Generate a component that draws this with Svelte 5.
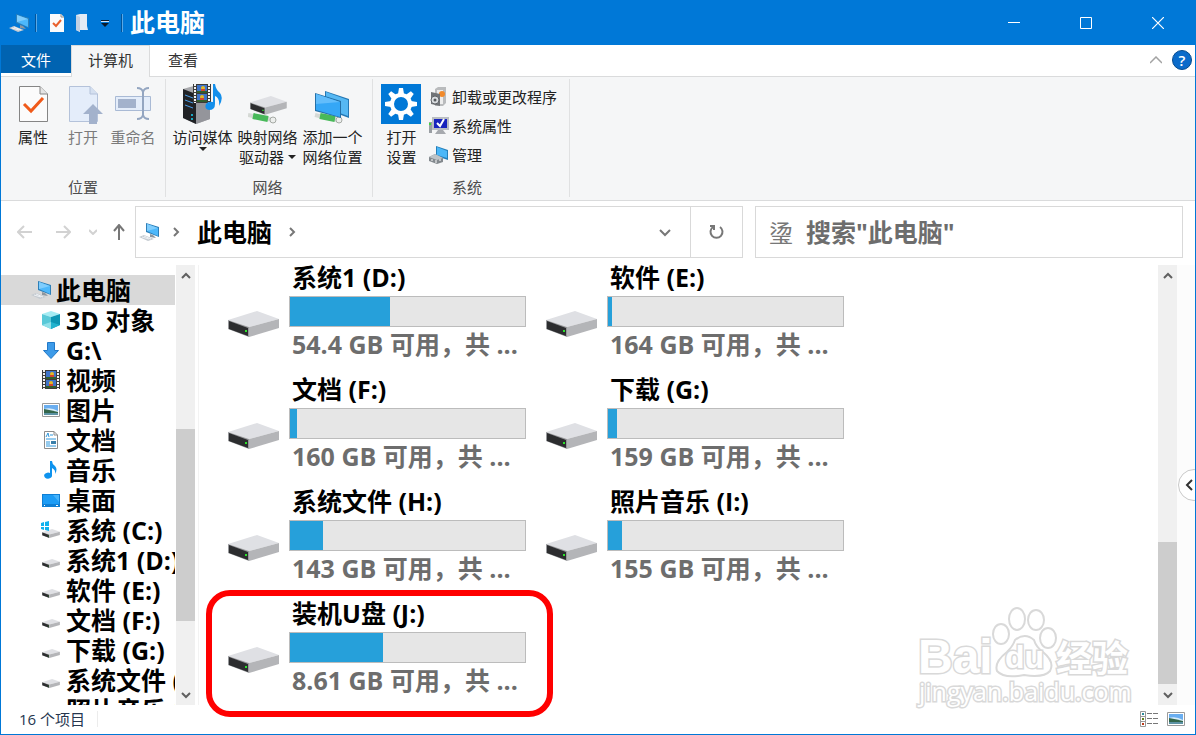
<script>
  const tree = [
    { icon: 'cube', label: '3D 对象' },
    { icon: 'down', label: 'G:\\' },
    { icon: 'film', label: '视频' },
    { icon: 'photo', label: '图片' },
    { icon: 'doc', label: '文档' },
    { icon: 'music', label: '音乐' },
    { icon: 'desktop', label: '桌面' },
    { icon: 'windrive', label: '系统 (C:)' },
    { icon: 'drive', label: '系统1 (D:)' },
    { icon: 'drive', label: '软件 (E:)' },
    { icon: 'drive', label: '文档 (F:)' },
    { icon: 'drive', label: '下载 (G:)' },
    { icon: 'drive', label: '系统文件 (H:)' },
    { icon: 'drive', label: '照片音乐 (I:)' }
  ];
  const drives = [
    { name: '系统1 (D:)', used: 42.6, free: '54.4 GB' },
    { name: '软件 (E:)', used: 1.8, free: '164 GB' },
    { name: '文档 (F:)', used: 3, free: '160 GB' },
    { name: '下载 (G:)', used: 3.8, free: '159 GB' },
    { name: '系统文件 (H:)', used: 14, free: '143 GB' },
    { name: '照片音乐 (I:)', used: 6, free: '155 GB' },
    { name: '装机U盘 (J:)', used: 39.6, free: '8.61 GB', marked: true }
  ];
  const teeth = [0, 45, 90, 135, 180, 225, 270, 315];
  let query = $state('');
</script>

{#snippet driveShape()}
  <path d="M0 9 29 0 51 8 21 16Z" fill="#dfe0e4" />
  <path d="M21 16 51 8V17L21 26Z" fill="#b4b5b8" />
  <path d="M0 9 21 16V26L0 18Z" fill="#97989b" />
  <path d="M1 10 20 17V25L1 18Z" fill="#2c2d2f" />
  <path d="M17 19h2v2h-2z" fill="#2be32b" />
{/snippet}

{#snippet filmShape()}
  <path d="M0 0H18V19H0Z" fill="#3b3b3b" />
  <path d="M2 0V19M16 0V19" stroke="#f3f3f3" stroke-width="2" stroke-dasharray="2 1" />
  <path d="M4 1H14V9H4ZM4 10H14V18H4Z" fill="#3f74c9" />
  <path d="M4 7H14V9H4ZM4 16H14V18H4Z" fill="#315d2d" />
  <circle cx="10" cy="4" r="2" fill="#e5b923" /><circle cx="9" cy="13" r="2" fill="#e5b923" />
  <path d="M8 5h4v2H8zM7 14h4v2H7z" fill="#d2452e" />
{/snippet}

{#snippet photoShape()}
  <path d="M.5 .5H17.5V13.5H.5Z" fill="#fff" stroke="#9a9a9a" />
  <path d="M2 2H16V12H2Z" fill="#6aaef0" />
  <path d="M2 6Q9 4 16 8V9H2Z" fill="#d9eefb" />
  <path d="M2 6Q8 7 16 9V10H2Z" fill="#33664b" />
  <path d="M2 10H16V12H2Z" fill="#5d93a5" />
{/snippet}

{#snippet pcShape()}
  <path d="M7 0 20 4V14L7 9Z" fill="#2d7fb8" />
  <path d="M8 1 19 5V13L8 8Z" fill="#4db8fb" />
  <path d="M8 1 19 5 8 8Z" fill="#7fcdfd" />
  <path d="M11 11 14 12 17 15 11 14Z" fill="#8d969e" />
  <path d="M0 14 5 12 15 16 9 18Z" fill="#c5cbd1" />
  <path d="M3 14 10 16M5 13 12 16" stroke="#eef1f4" />
{/snippet}

{#snippet chevron(d)}
  <svg width="12" height="12" viewBox="0 0 12 12" fill="none" stroke="currentColor" stroke-width="2" aria-hidden="true"><path {d} /></svg>
{/snippet}

{#snippet scrollbar(kind)}
  <div class="scrollbar {kind}">
    <button aria-label="向上滚动">{@render chevron('M2 8 6 4 10 8')}</button>
    <div class="track"><div class="thumb"></div></div>
    <button aria-label="向下滚动">{@render chevron('M2 4 6 8 10 4')}</button>
  </div>
{/snippet}

{#snippet treeIcon(kind)}
  <svg width="20" height="20" viewBox="0 0 20 20" aria-hidden="true">
    {#if kind === 'cube'}
      <path d="M1 4 10 1 19 4 10 7Z" fill="#a5ecf3" /><path d="M1 4 10 7V19L1 15Z" fill="#58c9d8" /><path d="M10 7 19 4V15L10 19Z" fill="#0d96b3" />
      <path d="M1 15 10 12V19Z" fill="#8fe0e9" /><path d="M10 12 19 15 10 19Z" fill="#22b3ce" />
    {:else if kind === 'down'}
      <path d="M6.500 2.500H13.500V10.500H17.500L10 18.500 2.500 10.500H6.500Z" fill="#3d9be9" stroke="#2279c8" />
    {:else if kind === 'film'}
      <g transform="translate(1 0)">{@render filmShape()}</g>
    {:else if kind === 'photo'}
      <g transform="translate(1 3)">{@render photoShape()}</g>
    {:else if kind === 'doc'}
      <path d="M3.500 1.500H13L16.500 5V18.500H3.500Z" fill="#fff" stroke="#8c8c8c" /><path d="M13 1.500V5H16.500" fill="none" stroke="#8c8c8c" />
      <path d="M5 7 7 3 8 7M9 5H12M5 9H15M5 12H9M5 14H9M5 16H15" fill="none" stroke="#2f97dc" /><path d="M10 11H15V14H10Z" fill="#3b7fa9" />
    {:else if kind === 'music'}
      <path d="M9 1H11Q11 4 14 6Q17 9 14 14Q15 10 11 8V15A4 3 0 1 1 9 13Z" fill="#0e93ee" />
    {:else if kind === 'desktop'}
      <path d="M1 4H19V17H1Z" fill="#0f7fd4" /><path d="M2 5H18V14H2Z" fill="#1d9cf5" /><path d="M12 5H18V12Z" fill="#45b3fb" /><path d="M3 15.500H4M15 15.500H17" stroke="#fff" />
    {:else}
      <g transform="translate(1 9) scale(.35)">{@render driveShape()}</g>
      {#if kind === 'windrive'}
        <path d="M0 2H8V10H0Z" fill="#fff" /><path d="M0 3 3 2V6H0ZM4 2 8 1V6H4ZM0 7H3V10L0 9ZM4 7H8V11L4 10Z" fill="#10b2ee" />
      {/if}
    {/if}
  </svg>
{/snippet}

<div class="window">
  <header class="titlebar">
    <svg class="app-icon" width="20" height="18" viewBox="0 0 20 18" aria-hidden="true">{@render pcShape()}</svg>
    <span class="rule"></span>
    <button class="quick check" aria-label="属性">
      <svg width="14" height="18" viewBox="0 0 14 18"><path d="M0 0H11L14 3V18H0Z" fill="#fbfbfb" /><path d="M11 0V3H14" fill="none" stroke="#8b8b8b" /><path d="M3 9 6 12 11 6" fill="none" stroke="#e9602c" stroke-width="2" /></svg>
    </button>
    <button class="quick" aria-label="新建文件夹">
      <svg width="12" height="18" viewBox="0 0 12 18"><path d="M0 1 4 0H11V12L12 16H4V18L0 16Z" fill="#e3ebf5" /><path d="M0 1 4 3V18L0 16Z" fill="#c3d1e3" /></svg>
    </button>
    <button class="quick more" aria-label="自定义快速访问工具栏">
      <svg width="8" height="8" viewBox="0 0 8 8"><path d="M0 0H8V1H0ZM0 3H8L4 7Z" fill="#0b1a2a" /><path d="M0 1H8V2H0Z" fill="#cfe3f7" /></svg>
    </button>
    <span class="rule"></span>
    <h1>此电脑</h1>
    <div class="controls">
      <button aria-label="最小化"><svg width="12" height="12" viewBox="0 0 12 12"><path d="M0 5.500H12" stroke="#fff" /></svg></button>
      <button aria-label="最大化"><svg width="12" height="12" viewBox="0 0 12 12"><path d="M.5 .5H11.500V11.500H.5Z" fill="none" stroke="#fff" /></svg></button>
      <button aria-label="关闭"><svg width="12" height="12" viewBox="0 0 12 12"><path d="M0 0 12 12M12 0 0 12" stroke="#fff" stroke-width="1.200" /></svg></button>
    </div>
  </header>

  <nav class="tabs" aria-label="功能区">
    <button class="file">文件</button>
    <button class="active">计算机</button>
    <button>查看</button>
    <div class="help">
      <button aria-label="折叠功能区"><svg width="12" height="8" viewBox="0 0 12 8"><path d="M0 7 6 1 12 7" fill="none" stroke="#a3a3a3" stroke-width="1.500" /></svg></button>
      <button class="question" aria-label="帮助">?</button>
    </div>
  </nav>

  <section class="ribbon">
    <div class="group place">
      <div class="tools">
        <button>
          <svg width="40" height="40" viewBox="0 0 40 40" aria-hidden="true"><path d="M6.500 2.500H27L34.500 10V37.500H6.500Z" fill="#fbfbfb" stroke="#858585" /><path d="M27 2.500V10H34.500" fill="#e4e4e4" stroke="#858585" /><path d="M11 20 18 27 30 14" fill="none" stroke="#f05a1a" stroke-width="3" /></svg>
          <span>属性</span>
        </button>
        <button disabled>
          <svg width="40" height="40" viewBox="0 0 40 40" aria-hidden="true"><path d="M6.500 2.500H27L34.500 10V37.500H6.500Z" fill="#e4edfa" stroke="#b4c2da" /><path d="M27 2.500V10H34.500" fill="#d5e0f0" stroke="#b4c2da" /><path d="M30 20 40 30H34V40H26V30H20Z" fill="#a3b2cc" /></svg>
          <span>打开</span>
        </button>
        <button disabled>
          <svg width="40" height="40" viewBox="0 0 40 40" aria-hidden="true"><path d="M2.500 12.500H37.500V26.500H2.500Z" fill="#e4edfa" stroke="#a9bad5" /><path d="M5 15H23V24H5Z" fill="#a3b2cc" /><path d="M24 4Q29 4 30 8Q31 4 36 4M30 8V31M24 35Q29 35 30 31Q31 35 36 35" fill="none" stroke="#94a6c1" stroke-width="2" /></svg>
          <span>重命名</span>
        </button>
      </div>
      <h2>位置</h2>
    </div>

    <div class="group network">
      <div class="tools">
        <button>
          <svg width="40" height="40" viewBox="0 0 40 40" aria-hidden="true">
            <path d="M0 5 14 1 27 8V35L13 40 0 34Z" fill="#a7a8ac" /><path d="M0 5 13 10V40L0 34Z" fill="#202226" /><path d="M13 10 27 7V35L13 40Z" fill="#94959b" />
            <path d="M2 11 10 14M2 16 10 19M2 21 10 24" stroke="#4a9ee8" /><circle cx="9" cy="35" r="1" fill="#19d4f6" /><circle cx="9" cy="31" r="1" fill="#19d4f6" />
            <g transform="translate(10 0)">{@render filmShape()}</g>
            <path d="M30 0H32Q33 6 37 9Q41 14 36 22Q37 14 32 12V20Q32 26 26 26Q21 25 23 20Q25 17 30 18Z" fill="#138feb" />
          </svg>
          <span>访问媒体</span>
          <i class="arrow"></i>
        </button>
        <button>
          <svg width="40" height="40" viewBox="0 0 40 40" aria-hidden="true">
            <path d="M0 31 25 36" stroke="#d5d9d5" stroke-width="4" /><path d="M5 32 20 35" stroke="#48b95a" stroke-width="6" /><circle cx="25" cy="36" r="3" fill="#eceeec" stroke="#a5aaa5" />
            <g transform="translate(2 12) scale(.72)">{@render driveShape()}</g>
          </svg>
          <span>映射网络<br />驱动器<i class="arrow inline"></i></span>
        </button>
        <button>
          <svg width="40" height="40" viewBox="0 0 40 40" aria-hidden="true">
            <path d="M12 7 36 15V34L12 25Z" fill="#2578b4" /><path d="M13 8 35 16V32L13 24Z" fill="#56b8f3" />
            <path d="M2 31 28 37" stroke="#d5d9d5" stroke-width="4" /><path d="M7 32 22 35" stroke="#48b95a" stroke-width="6" /><circle cx="26" cy="36" r="3" fill="#eceeec" stroke="#a5aaa5" />
            <path d="M2 9 28 17V34L2 27Z" fill="#2470a8" /><path d="M3 10 27 18V33L3 26Z" fill="#35a7f6" /><path d="M3 10 27 18 3 20Z" fill="#62bdfb" />
          </svg>
          <span>添加一个<br />网络位置</span>
        </button>
      </div>
      <h2>网络</h2>
    </div>

    <div class="group system">
      <div class="tools">
        <button>
          <svg width="40" height="40" viewBox="0 0 40 40" aria-hidden="true">
            <path d="M0 0H40V40H0Z" fill="#0078d7" />
            {#each teeth as angle}
              <path d="M17 10 18 4H22L23 10Z" fill="#fff" transform="rotate({angle} 20 20)" />
            {/each}
            <circle cx="20" cy="20" r="9" fill="none" stroke="#fff" stroke-width="4" />
          </svg>
          <span>打开<br />设置</span>
        </button>
        <div class="stack">
          <button>
            <svg width="20" height="20" viewBox="0 0 20 20" aria-hidden="true"><path d="M6 2 9 0H17V16L14 19H6Z" fill="#b9bbbd" /><path d="M8 3H14V17H8Z" fill="#ededed" /><circle cx="13" cy="7" r="3" fill="#f28a2b" /><path d="M2 5 11 7V19L2 17Z" fill="#717477" /><circle cx="6" cy="13" r="4" fill="#dadde0" stroke="#606468" /><circle cx="6" cy="13" r="1.500" fill="#55595c" /></svg>
            <span>卸载或更改程序</span>
          </button>
          <button>
            <svg width="20" height="20" viewBox="0 0 20 20" aria-hidden="true"><path d="M0 6H3V17H0Z" fill="#999ea3" /><path d="M0 7H2V9H0Z" fill="#3ddb3a" /><path d="M3 1H20V14H3Z" fill="#b9bdc2" /><path d="M5 3H18V12H5Z" fill="#1824bd" /><path d="M8 7 11 10 15 3" fill="none" stroke="#fff" stroke-width="2" /><path d="M9 14H14L17 18H6Z" fill="#a6a9ae" /></svg>
            <span>系统属性</span>
          </button>
          <button>
            <svg width="20" height="20" viewBox="0 0 20 20" aria-hidden="true"><path d="M7 1 19 5V15L7 11Z" fill="#247fba" /><path d="M8 2 18 6V13L8 10Z" fill="#4bb7f8" /><path d="M0 12 6 9 14 13V17L8 19 0 16Z" fill="#83898e" /><path d="M0 12 6 9 14 13 8 15Z" fill="#bfc4c8" /><path d="M3 14V16M7 15V18M11 14V16" stroke="#fff" /></svg>
            <span>管理</span>
          </button>
        </div>
      </div>
      <h2>系统</h2>
    </div>
  </section>

  <section class="navigation">
    <div class="history">
      <button disabled aria-label="后退"><svg width="16" height="14" viewBox="0 0 16 14"><path d="M15 7H1M7 1 1 7 7 13" /></svg></button>
      <button disabled aria-label="前进"><svg width="16" height="14" viewBox="0 0 16 14"><path d="M1 7H15M9 1 15 7 9 13" /></svg></button>
      <button class="recent" disabled aria-label="最近位置"><svg width="8" height="6" viewBox="0 0 8 6"><path d="M0 1 4 5 8 1" /></svg></button>
      <button class="up" aria-label="上移"><svg width="12" height="16" viewBox="0 0 12 16"><path d="M6 16V1M1 7 6 1 11 7" /></svg></button>
    </div>
    <div class="address">
      <svg width="20" height="18" viewBox="0 0 20 18" aria-hidden="true">{@render pcShape()}</svg>
      <span class="crumb">{@render chevron('M4 2 8 6 4 10')}</span>
      <button class="path">此电脑</button>
      <span class="crumb">{@render chevron('M4 2 8 6 4 10')}</span>
      <button class="expand" aria-label="以前的位置">{@render chevron('M1 4 6 9 11 4')}</button>
      <button class="refresh" aria-label="刷新"><svg width="16" height="16" viewBox="0 0 16 16" fill="none" stroke="#777" stroke-width="2"><path d="M4 3A6 6 0 1 0 11 3" /><path d="M1 2H5V6" /></svg></button>
    </div>
    <label class="search">
      <span class="glyph" aria-hidden="true">&#x2C361;</span>
      <input type="text" aria-label="搜索" placeholder={'搜索"此电脑"'} bind:value={query} />
    </label>
  </section>

  <main class="body">
    <nav class="tree" aria-label="导航窗格">
      <a class="root" href="#pc"><svg width="20" height="18" viewBox="0 0 20 18" aria-hidden="true">{@render pcShape()}</svg><span>此电脑</span></a>
      {#each tree as item}
        <a href="#item">{@render treeIcon(item.icon)}<span>{item.label}</span></a>
      {/each}
    </nav>
    {@render scrollbar('side')}
    <section class="files">
      {#each drives as drive}
        <article class:marked={drive.marked}>
          <svg width="52" height="28" viewBox="0 0 52 28" aria-hidden="true">{@render driveShape()}</svg>
          <div class="info">
            <h3>{drive.name}</h3>
            <div class="meter" role="meter" aria-label={drive.name} aria-valuemin="0" aria-valuemax="100" aria-valuenow={drive.used}><div style="width: {drive.used}%"></div></div>
            <p>{drive.free} 可用，共 ...</p>
          </div>
        </article>
      {/each}
      <svg class="watermark" width="224" height="112" viewBox="0 0 224 112" aria-hidden="true">
        <g fill="#fff" stroke="#d9d9d9" stroke-width="2">
          <ellipse cx="89" cy="37" rx="8" ry="10" /><ellipse cx="105" cy="22" rx="8" ry="11" /><ellipse cx="124" cy="23" rx="8" ry="10" /><ellipse cx="136" cy="41" rx="8" ry="10" />
          <path d="M85 74Q82 65 95 55Q101 49 103 43Q113 35 122 43Q124 50 131 55Q143 65 138 74Q132 81 112 78Q92 82 85 74Z" />
          <g paint-order="stroke" stroke-width="3">
            <text class="latin" x="6" y="76" font-size="48">Bai</text>
            <text class="latin" x="93" y="71" font-size="32">du</text>
            <text class="han" x="144" y="75" font-size="36">经验</text>
            <text class="url" x="7" y="104" font-size="25">jingyan.baidu.com</text>
          </g>
        </g>
      </svg>
    </section>
    {@render scrollbar('main')}
    <div class="edge"><button aria-label="展开侧栏">{@render chevron('M9 1 4 6 9 11')}</button></div>
  </main>

  <footer>
    <span>16 个项目</span>
    <div class="views">
      <button aria-label="详细信息"><svg width="20" height="16" viewBox="0 0 20 16"><path d="M1.500 .5H6.500V15.500H1.500ZM1.500 5.500H6.500M1.500 10.500H6.500" fill="#fff" stroke="#999" /><path d="M3 2H5V4H3Z" fill="#2e8c9c" /><path d="M3 7H5V9H3Z" fill="#65811e" /><path d="M3 12H5V14H3Z" fill="#bd3b1a" /><path d="M8 2.500H13M14 2.500H19M8 7.500H13M14 7.500H19M8 12.500H13M14 12.500H19" stroke="#777" /></svg></button>
      <button aria-label="大图标"><svg width="18" height="14" viewBox="0 0 18 14">{@render photoShape()}</svg></button>
    </div>
  </footer>
</div>

<style>
  :global(body) { margin: 0; background: #fff; }
  .window, .window button, .window input { font-family: "Open Sans", "Noto Sans CJK SC", sans-serif; }
  .window { box-sizing: border-box; height: 100vh; min-height: 480px; display: flex; flex-direction: column; border: 1px solid #0078d7; border-top: 0; background: #fff; color: #000; font-size: 15px; overflow: hidden; }
  .window button { display: flex; align-items: center; justify-content: center; margin: 0; padding: 0; border: 0; background: none; color: inherit; font-size: inherit; }
  svg { flex: none; display: block; }
  h1, h2, h3, p { margin: 0; white-space: nowrap; }

  .titlebar { flex: none; display: flex; align-items: center; height: 45px; padding-left: 8px; background: #0078d7; color: #fff; }
  .rule { width: 1px; height: 18px; margin: 0 7px 0 6px; border-left: 1px solid #01549b; background: #5ba8e5; }
  .window .quick { margin: 0 6px; }
  .window .quick.more { margin: 2px 6px 0 7px; }
  h1 { font-size: 25px; line-height: 45px; font-weight: 700; }
  .controls { display: flex; margin-left: auto; margin-right: 1px; }
  .controls button { width: 72px; height: 45px; }

  .tabs { flex: none; display: flex; height: 31px; border-bottom: 1px solid #dadbdc; color: #333; }
  .window .tabs > button { width: 66px; padding-bottom: 2px; }
  .window .tabs .file { width: 70px; height: 28px; padding-bottom: 0; background: #0063b1; color: #fff; }
  .window .tabs .active { width: 79px; height: 32px; padding-bottom: 4px; box-sizing: border-box; border: 1px solid #dadbdc; border-width: 1px 1px 0; background: #f5f6f7; }
  .help { display: flex; align-items: center; gap: 10px; margin-left: auto; padding: 0 3px 2px 0; }
  .window .question { width: 20px; height: 20px; box-sizing: border-box; border-radius: 50%; border: 1px solid #064b8e; background: #0b6bca; color: #fff; font-weight: 600; line-height: 18px; }

  .ribbon { flex: none; display: flex; height: 123px; border-bottom: 1px solid #dadbdc; background: #f5f6f7; color: #222; }
  .group { display: flex; flex-direction: column; box-sizing: border-box; margin: 2px 0 3px; padding-top: 5px; border-right: 1px solid #e0e1e2; }
  .group h2 { margin-top: auto; text-align: center; font-size: 15px; line-height: 20px; font-weight: 400; color: #4c4c4c; }
  .tools { display: flex; align-items: flex-start; }
  .window .tools > button { flex-direction: column; justify-content: flex-start; line-height: 20px; white-space: nowrap; }
  .tools > button span { margin-top: 3px; }
  .window .tools > button:disabled { color: #7b7b7b; }
  .place { width: 165px; padding-left: 7px; padding-right: 7px; }
  .place .tools > button { width: 50px; }
  .network { width: 207px; padding-left: 4px; padding-right: 7px; }
  .network .tools > button { width: 65px; }
  .system { width: 197px; padding-left: 4px; padding-right: 12px; }
  .system .tools > button { width: 50px; }
  .stack { display: flex; flex-direction: column; margin-top: -2px; }
  .window .stack button { justify-content: flex-start; gap: 3px; height: 29px; white-space: nowrap; padding-left: 3px; }
  .arrow { width: 0; height: 0; border: 4px solid transparent; border-top-color: #222; border-bottom: 0; }
  .arrow.inline { display: inline-block; margin-left: 4px; vertical-align: 4px; }

  .navigation { flex: none; display: flex; align-items: center; height: 64px; box-sizing: border-box; padding: 0 12px 2px 16px; }
  .history { display: flex; align-items: center; flex: none; width: 118px; height: 52px; gap: 22px; }
  .history svg { fill: none; stroke: #d2d2d2; stroke-width: 2; }
  .history .recent { margin-left: -4px; }
  .history .up { margin-left: -6px; }
  .history .up svg { stroke: #777; }
  .address, .search { display: flex; align-items: center; box-sizing: border-box; height: 52px; min-width: 0; border: 1px solid #d9d9d9; }
  .address { flex: 1 1 608px; padding-left: 3px; color: #777; }
  .crumb { margin: 0 10px 0 11px; }
  .window .path { margin: 0 3px 2px 5px; color: #000; font-size: 25px; font-weight: 700; }
  .window .expand { width: 50px; height: 50px; margin-left: auto; }
  .window .refresh { width: 52px; height: 50px; border-left: 1px solid #d9d9d9; }
  .search { flex: 1 1 428px; margin-left: 12px; padding-left: 13px; }
  .glyph { width: 24px; font-family: "Noto Sans CJK SC", sans-serif; font-size: 24px; line-height: 48px; color: #777; }
  .search input { flex: 1; min-width: 0; height: 48px; margin-left: 13px; padding: 0; border: 0; outline: 0; background: none; font-size: 25px; font-weight: 700; }
  .search input::placeholder { color: #6d6d6d; opacity: 1; }

  .body { flex: 1; min-height: 0; display: flex; }
  .tree { flex: none; width: 174px; box-sizing: border-box; padding-top: 10px; overflow: hidden; font-size: 25px; font-weight: 700; }
  .tree a { display: flex; align-items: center; gap: 5px; height: 30px; padding-left: 40px; color: #000; text-decoration: none; line-height: 30px; white-space: nowrap; }
  .tree .root { padding-left: 30px; background: #d9d9d9; }
  .scrollbar { flex: none; display: flex; flex-direction: column; width: 19px; background: #f0f0f0; color: #606060; }
  .side { margin-left: 1px; }
  .scrollbar button { height: 21px; }
  .track { flex: 1; display: flex; flex-direction: column; }
  .thumb { background: #cdcdcd; }
  .side .track { padding-top: 143px; }
  .side .thumb { height: 192px; }
  .main .track { justify-content: flex-end; }
  .main .thumb { height: 142px; }
  .files { flex: 1; min-width: 0; display: grid; grid-template-columns: repeat(auto-fill, 318px); grid-auto-rows: 98px; row-gap: 14px; margin-left: 3px; padding-left: 29px; border-left: 1px solid #f3f3f3; position: relative; align-content: start; }
  article { display: flex; position: relative; }
  article > svg { margin-top: 46px; }
  .info { width: 237px; margin-left: 9px; }
  h3, p { padding-left: 3px; font-size: 25px; font-weight: 700; }
  h3 { line-height: 24px; }
  p { line-height: 34px; color: #6d6d6d; }
  .meter { box-sizing: border-box; height: 31px; margin-top: 7px; border: 1px solid #bcbcbc; background: #e6e6e6; }
  .meter div { height: 100%; background: #26a0da; }
  .marked::after { content: ""; position: absolute; box-sizing: border-box; left: -22px; top: -11px; width: 347px; height: 127px; border: 6px solid #f00; border-radius: 24px; }
  .watermark { position: absolute; right: 22px; bottom: -4px; }
  .latin { font-family: "Liberation Sans", sans-serif; font-weight: 700; }
  .han { font-family: "Noto Sans CJK SC", sans-serif; font-weight: 700; }
  .url { font-family: "Open Sans", sans-serif; }
  .edge { flex: none; width: 18px; background: #fcfcfc; position: relative; }
  .window .edge button { position: absolute; left: 1px; top: 204px; width: 32px; height: 32px; box-sizing: border-box; justify-content: flex-start; padding-left: 4px; border: 1px solid #c9c9c9; border-radius: 50%; background: #fff; color: #333; }

  footer { flex: none; display: flex; align-items: center; justify-content: space-between; height: 29px; box-sizing: border-box; padding: 0 10px 2px 18px; color: #26364f; }
  footer > span { padding-right: 12px; border-right: 1px solid #ececec; line-height: 16px; }
  .views { display: flex; gap: 8px; }
</style>
